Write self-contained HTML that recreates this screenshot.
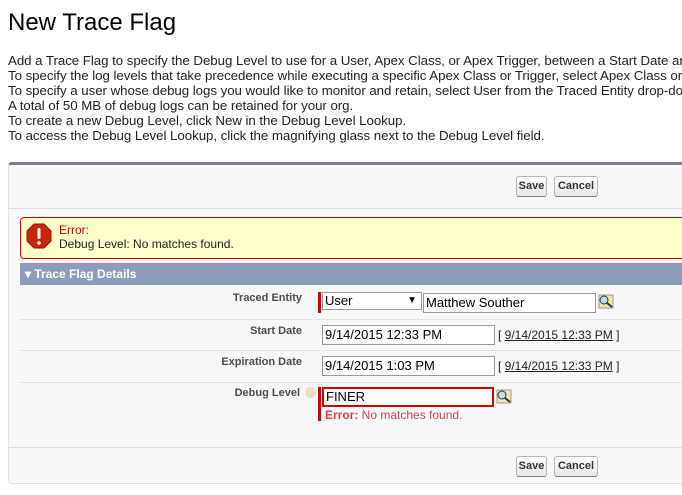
<!DOCTYPE html><html><head><style>
*{margin:0;padding:0;box-sizing:border-box}
body{width:682px;height:495px;overflow:hidden;background:#fff;font-family:"Liberation Sans",Arial,sans-serif;font-size:12px;color:#222;position:relative}
.a{position:absolute;white-space:nowrap}
.btn{position:absolute;height:21px;border:1px solid #b5b5b5;border-bottom-color:#7f7f7f;border-radius:3px;background:linear-gradient(#fff,#e8e8e8);font-weight:bold;font-size:11px;color:#333;text-align:center;line-height:19px}
.lbl{position:absolute;font-weight:bold;font-size:11px;color:#4a4a56;text-align:right;right:380px}
.inp{position:absolute;height:21px;border:1px solid #999;background:#fff;font-size:13px;padding-left:2px;line-height:19px;color:#000}
.sep{position:absolute;left:20px;right:0;height:1px;background:#e3e3e3}
.req{position:absolute;width:3px;background:#c00}
.lk{position:absolute;width:16px;height:15px}
</style></head><body>
<div class="a" style="left:8px;top:9px;font-size:24px;color:#000">New Trace Flag</div>
<div class="a" style="left:8px;top:53px;line-height:15px;font-size:13.3px;letter-spacing:-0.05px;color:#222">Add a Trace Flag to specify the Debug Level to use for a User, Apex Class, or Apex Trigger, between a Start Date and<br>To specify the log levels that take precedence while executing a specific Apex Class or Trigger, select Apex Class or<br>To specify a user whose debug logs you would like to monitor and retain, select User from the Traced Entity drop-down<br>A total of 50 MB of debug logs can be retained for your org.<br>To create a new Debug Level, click New in the Debug Level Lookup.<br>To access the Debug Level Lookup, click the magnifying glass next to the Debug Level field.</div>
<div style="position:absolute;left:8px;top:162px;width:690px;height:322px;background:#f8f8f8;border-top:3px solid #747e96;border-left:1px solid #e0e0e0;border-bottom:1px solid #e0e0e0;border-radius:4px 0 0 4px"></div>
<div class="btn" style="left:516px;top:176px;width:31px">Save</div>
<div class="btn" style="left:554px;top:176px;width:44px">Cancel</div>
<div style="position:absolute;left:9px;right:0;top:208px;height:1px;background:#dcdcdc"></div>
<div style="position:absolute;left:20px;top:217px;width:680px;height:42px;background:#ffffcc;border:1px solid #c00;border-radius:4px"></div>
<svg class="a" style="left:26px;top:223px" width="26" height="26" viewBox="0 0 26 26"><polygon points="8,1 18,1 25,8 25,18 18,25 8,25 1,18 1,8" fill="#c8260b" stroke="#8a1a08"/><rect x="11.5" y="5" width="3" height="11" rx="1.5" fill="#fff"/><circle cx="13" cy="20" r="1.8" fill="#fff"/></svg>
<div class="a" style="left:59px;top:223px;color:#c00;font-size:12px">Error:</div>
<div class="a" style="left:59px;top:237px;color:#222">Debug Level: No matches found.</div>
<div style="position:absolute;left:20px;right:0;top:263px;height:22px;background:#8e9dbe"></div>
<div class="a" style="left:25px;top:267px;color:#fff;font-weight:bold;font-size:12px">▾ Trace Flag Details</div>
<div class="lbl" style="top:292px">Traced Entity</div>
<div class="req" style="left:318px;top:292px;height:21px"></div>
<div class="inp" style="left:322px;top:292px;width:100px;height:18px;line-height:16px;font-size:13px">User<span style="position:absolute;right:4px;font-size:10px">▼</span></div>
<div class="inp" style="left:423px;top:293px;width:173px;height:20px;line-height:18px">Matthew Souther</div>
<svg class="lk" style="left:598px;top:294px" viewBox="0 0 16 15"><rect x="1" y="1" width="14" height="13" fill="#f3e7b0" stroke="#999"/><circle cx="6" cy="6" r="4" fill="#bfdcf5" stroke="#333"/><line x1="9" y1="9" x2="14" y2="13" stroke="#333" stroke-width="2"/></svg>
<div class="sep" style="top:319px"></div>
<div class="lbl" style="top:325px">Start Date</div>
<div class="inp" style="left:322px;top:325px;width:173px;height:20px;line-height:18px">9/14/2015 12:33 PM</div>
<div class="a" style="left:498px;top:328px">[ <u>9/14/2015 12:33 PM</u> ]</div>
<div class="sep" style="top:350px"></div>
<div class="lbl" style="top:356px">Expiration Date</div>
<div class="inp" style="left:322px;top:356px;width:173px;height:20px;line-height:18px">9/14/2015 1:03 PM</div>
<div class="a" style="left:498px;top:359px">[ <u>9/14/2015 12:33 PM</u> ]</div>
<div class="sep" style="top:382px"></div>
<div class="lbl" style="top:387px;right:382px">Debug Level</div>
<div class="a" style="left:305px;top:387px;width:11px;height:11px;border-radius:50%;background:#f0dcc0"></div>
<div class="req" style="left:318px;top:387px;height:34px"></div>
<div class="inp" style="left:322px;top:387px;width:172px;height:20px;line-height:16px;border:2px solid #c00">FINER</div>
<svg class="lk" style="left:496px;top:389px" viewBox="0 0 16 15"><rect x="1" y="1" width="14" height="13" fill="#f3e7b0" stroke="#999"/><circle cx="6" cy="6" r="4" fill="#bfdcf5" stroke="#333"/><line x1="9" y1="9" x2="14" y2="13" stroke="#333" stroke-width="2"/></svg>
<div class="a" style="left:325px;top:408px;color:#d0464a"><b>Error:</b> No matches found.</div>
<div style="position:absolute;left:9px;right:0;top:447px;height:1px;background:#dcdcdc"></div>
<div class="btn" style="left:516px;top:456px;width:31px">Save</div>
<div class="btn" style="left:554px;top:456px;width:44px">Cancel</div>
</body></html>
